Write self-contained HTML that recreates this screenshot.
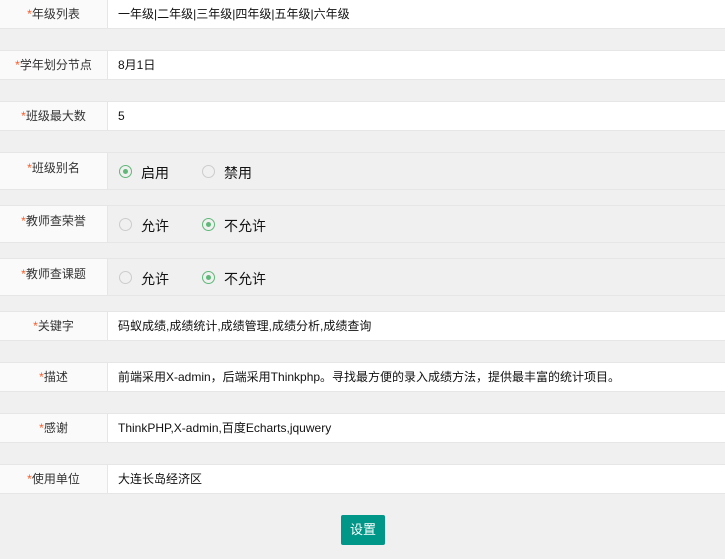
<!DOCTYPE html>
<html><head><meta charset="utf-8"><style>
body{margin:0;width:725px;height:559px;background:#f0f0f0;position:relative;overflow:hidden;font-family:"Liberation Sans","Noto Sans CJK SC",sans-serif;font-size:12px;color:#222}
.row{position:absolute;left:0;width:725px;box-sizing:border-box;border-top:1px solid #e6e6e6;border-bottom:1px solid #e6e6e6}
.lab{position:absolute;left:0;top:0;bottom:0;width:108px;background:#fafafa;border-right:1px solid #e6e6e6;box-sizing:border-box;text-align:center;color:#333}
.lab i{font-style:normal;color:#ff5722}
.val{position:absolute;left:108px;right:0;top:0;bottom:0;background:#fff;padding-left:10px;color:#111}
.rad .val{background:#f0f0f0}
.r{position:absolute;top:12px;width:13px;height:13px;border:1px solid #ccc;border-radius:50%;box-sizing:border-box}
.r.on{border-color:#5fb878}
.r.on:after{content:"";position:absolute;left:3px;top:3px;width:5px;height:5px;border-radius:50%;background:#5fb878}
.rt{position:absolute;top:10px;font-size:14px;color:#111}
.btn{position:absolute;left:341px;top:515px;width:44px;height:30px;background:#009688;color:#fff;border-radius:2px;text-align:center;line-height:30px;font-size:13px}
</style></head><body>
<div class="row" style="top:-1px;height:30px"><div class="lab" style="line-height:28px"><i>*</i>年级列表</div><div class="val" style="line-height:28px">一年级|二年级|三年级|四年级|五年级|六年级</div></div>
<div class="row" style="top:50px;height:30px"><div class="lab" style="line-height:28px"><i>*</i>学年划分节点</div><div class="val" style="line-height:28px">8月1日</div></div>
<div class="row" style="top:101px;height:30px"><div class="lab" style="line-height:28px"><i>*</i>班级最大数</div><div class="val" style="line-height:28px">5</div></div>
<div class="row rad" style="top:152px;height:38px"><div class="lab" style="line-height:30px"><i>*</i>班级别名</div><div class="val"><span class="r on" style="left:11px"></span><span class="rt" style="left:33px">启用</span><span class="r" style="left:94px"></span><span class="rt" style="left:116px">禁用</span></div></div>
<div class="row rad" style="top:205px;height:38px"><div class="lab" style="line-height:30px"><i>*</i>教师查荣誉</div><div class="val"><span class="r" style="left:11px"></span><span class="rt" style="left:33px">允许</span><span class="r on" style="left:94px"></span><span class="rt" style="left:116px">不允许</span></div></div>
<div class="row rad" style="top:258px;height:38px"><div class="lab" style="line-height:30px"><i>*</i>教师查课题</div><div class="val"><span class="r" style="left:11px"></span><span class="rt" style="left:33px">允许</span><span class="r on" style="left:94px"></span><span class="rt" style="left:116px">不允许</span></div></div>
<div class="row" style="top:311px;height:30px"><div class="lab" style="line-height:28px"><i>*</i>关键字</div><div class="val" style="line-height:28px">码蚁成绩,成绩统计,成绩管理,成绩分析,成绩查询</div></div>
<div class="row" style="top:362px;height:30px"><div class="lab" style="line-height:28px"><i>*</i>描述</div><div class="val" style="line-height:28px">前端采用X-admin，后端采用Thinkphp。寻找最方便的录入成绩方法，提供最丰富的统计项目。</div></div>
<div class="row" style="top:413px;height:30px"><div class="lab" style="line-height:28px"><i>*</i>感谢</div><div class="val" style="line-height:28px">ThinkPHP,X-admin,百度Echarts,jquwery</div></div>
<div class="row" style="top:464px;height:30px"><div class="lab" style="line-height:28px"><i>*</i>使用单位</div><div class="val" style="line-height:28px">大连长岛经济区</div></div>
<div class="btn">设置</div>
</body></html>
